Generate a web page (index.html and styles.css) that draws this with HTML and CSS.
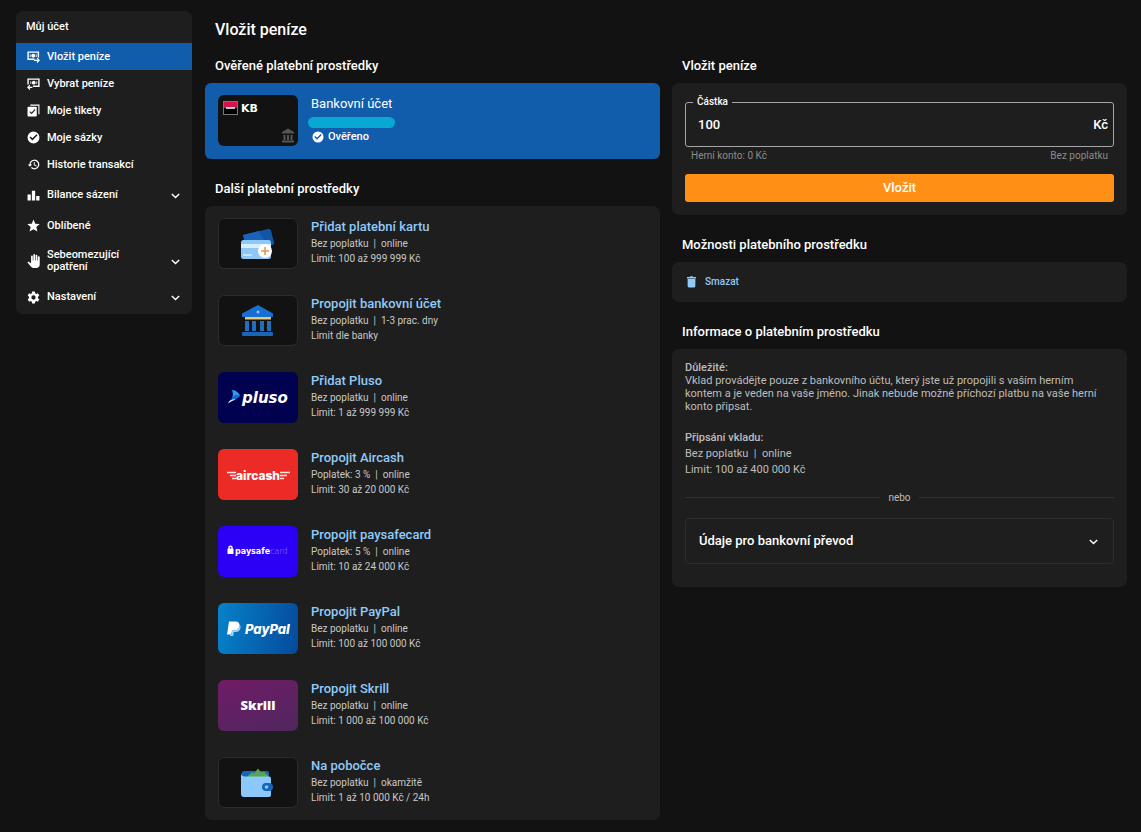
FILE: index.html
```html
<!DOCTYPE html>
<html lang="cs">
<head>
<meta charset="utf-8">
<meta name="viewport" content="width=device-width, initial-scale=1">
<title>Vložit peníze</title>
<link rel="stylesheet" href="styles.css">
</head>
<body>
<svg class="sprite" width="0" height="0" aria-hidden="true">
  <symbol id="chevron" viewBox="0 0 24 24"><path d="M4 8.500l8 8 8-8" fill="none" stroke="currentColor" stroke-width="3.200"/></symbol>
  <symbol id="check" viewBox="0 0 24 24"><path fill-rule="evenodd" d="M12 1a11 11 0 1 0 0 22 11 11 0 0 0 0-22zM10 17.5l-5.500-5.500 2-2 3.500 3.500 7.500-7.500 2 2z" fill="currentColor"/></symbol>
</svg>
<div class="page">
  <nav class="sidebar" aria-label="Můj účet">
    <h2 class="sidebar-title">Můj účet</h2>
    <a class="nav-item active" href="#vlozit"><svg class="nav-icon" viewBox="0 0 24 24"><path d="M14 17H2V4h19v10" fill="none" stroke="currentColor" stroke-width="2.600"/><circle cx="11.500" cy="10.500" r="3.500" fill="currentColor"/><path d="M6 8v5M17 8v5" stroke="currentColor" stroke-width="1.500"/><path d="M13 19h9M18.500 15l4 4-4 4" fill="none" stroke="currentColor" stroke-width="2.200"/></svg>Vložit peníze</a>
    <a class="nav-item" href="#vybrat"><svg class="nav-icon" viewBox="0 0 24 24"><path d="M2 14V4h20v13H11" fill="none" stroke="currentColor" stroke-width="2.600"/><circle cx="12.500" cy="10.500" r="3.500" fill="currentColor"/><path d="M7 8v5M18 8v5" stroke="currentColor" stroke-width="1.500"/><path d="M10 19H2M5.500 15l-4 4 4 4" fill="none" stroke="currentColor" stroke-width="2.200"/></svg>Vybrat peníze</a>
    <a class="nav-item" href="#tikety"><svg class="nav-icon" viewBox="0 0 24 24"><path d="M6 2h16v17" fill="none" stroke="currentColor" stroke-width="2"/><rect x="1" y="5" width="17" height="18" rx="1.500" fill="currentColor"/><path d="M5 14l3.500 3.500L15 10" fill="none" stroke="#1e1e1e" stroke-width="2"/></svg>Moje tikety</a>
    <a class="nav-item" href="#sazky"><svg class="nav-icon" viewBox="0 0 24 24"><use href="#check"/></svg>Moje sázky</a>
    <a class="nav-item" href="#historie"><svg class="nav-icon" viewBox="0 0 24 24"><path d="M13.500 3a9 9 0 0 0-9 9H1.500l4 4.200 4-4.200H6.800a6.800 6.800 0 1 1 2 4.800l-1.500 1.500A9 9 0 1 0 13.500 3zm-1 4.500v5.500l4.500 2.700.9-1.500-3.700-2.200V7.500z" fill="currentColor"/></svg>Historie transakcí</a>
    <button class="nav-item nav-group" type="button" aria-expanded="false"><svg class="nav-icon" viewBox="0 0 24 24"><path d="M1 10h6v11H1zM9 3h6v18H9zM17 13h6v8h-6z" fill="currentColor"/></svg><span class="nav-text">Bilance sázení</span><svg class="chevron" viewBox="0 0 24 24"><use href="#chevron"/></svg></button>
    <a class="nav-item" href="#oblibene"><svg class="nav-icon" viewBox="0 0 24 24"><path d="M12 1l3.300 7.700 8.200.7-6.300 5.500L19.200 23 12 18.700 4.800 23l2-8.100L.5 9.400l8.200-.7z" fill="currentColor"/></svg>Oblíbené</a>
    <button class="nav-item nav-group two-line" type="button" aria-expanded="false"><svg class="nav-icon hand" viewBox="0 0 24 26"><path d="M23.500 6v13a7 7 0 0 1-7 7h-4c-2 0-3.700-.8-5-2.200L.5 15.500c1.200-1.300 2.700-1.200 4-.3L7.500 17V4.500a1.500 1.500 0 0 1 3.200 0V12h1V1.800a1.500 1.500 0 0 1 3.200 0V12h1V3a1.500 1.500 0 0 1 3.200 0v9h1V6a1.700 1.700 0 0 1 3.400 0z" fill="currentColor"/></svg><span class="nav-text">Sebeomezující opatření</span><svg class="chevron" viewBox="0 0 24 24"><use href="#chevron"/></svg></button>
    <button class="nav-item nav-group" type="button" aria-expanded="false"><svg class="nav-icon" viewBox="0 0 24 24"><path fill-rule="evenodd" d="M9.500 1h5l.6 3.200 2 1.200 3.100-1.100 2.500 4.300-2.500 2.200v2.400l2.500 2.200-2.500 4.300-3.100-1.100-2 1.200-.6 3.200h-5l-.6-3.200-2-1.200-3.100 1.100-2.500-4.300 2.500-2.200v-2.400L1.300 8.600l2.500-4.300 3.100 1.100 2-1.200zM12 8a4 4 0 1 0 0 8 4 4 0 0 0 0-8z" fill="currentColor"/></svg><span class="nav-text">Nastavení</span><svg class="chevron" viewBox="0 0 24 24"><use href="#chevron"/></svg></button>
  </nav>

  <main class="content">
    <h1 class="page-title">Vložit peníze</h1>
    <div class="columns">
      <section class="column">
        <h2 class="heading">Ověřené platební prostředky</h2>
        <button class="verified" type="button" aria-pressed="true">
          <svg class="thumb plain" viewBox="0 0 80 51"><rect x="5.500" y="6.500" width="14" height="13" fill="#000" stroke="#77777b"/><path d="M6 7h13v6H6z" fill="#d5124d"/><path d="M8 13h9" stroke="#fff" stroke-width="1.400"/><text class="logo-kb" x="23" y="17">KB</text><path d="M70 33.500l6 3.500v1.500H64V37zM65.500 40h2v5h-2zM69 40h2v5h-2zM72.500 40h2v5h-2zM64 45.500h12v2H64z" fill="#555"/></svg>
          <span class="verified-info">
            <span class="verified-name">Bankovní účet</span>
            <span class="redacted"></span>
            <span class="verified-state"><svg class="state-icon" viewBox="0 0 24 24"><use href="#check"/></svg>Ověřeno</span>
          </span>
        </button>

        <h2 class="heading">Další platební prostředky</h2>
        <ul class="methods">
          <li class="method">
            <svg class="thumb" viewBox="0 0 80 51"><path d="M25 17l25-6q2.500-.5 3 1.500l3 12q.4 2-1.500 2.500L29 33z" fill="#1254a5"/><path d="M25 17l16-3.900 9 16L29 33z" fill="#1c62b8"/><rect x="23" y="22" width="30" height="19" rx="2.500" fill="#8ec8f6"/><path d="M23 26h30v4H23z" fill="#d7eeff"/><path d="M25 37h9" stroke="#d7eeff" stroke-width="1.500"/><circle cx="47" cy="33" r="7" fill="#fff"/><path d="M47 29v8M43 33h8" stroke="#e89a4f" stroke-width="1.600"/></svg>
            <div class="method-info"><a class="method-name" href="#karta">Přidat platební kartu</a><span>Bez poplatku &nbsp;|&nbsp; online</span><span>Limit: 100 až 999 999 Kč</span></div>
          </li>
          <li class="method">
            <svg class="thumb" viewBox="0 0 80 51"><path d="M40 10l15 8.500V22H24v-3.500z" fill="#176fd0"/><circle cx="40" cy="17" r="1.500" fill="#8bc8ff"/><path d="M27 22h26v2.500H27z" fill="#e5c77b"/><path d="M27 26h4v10h-4zM34 26h4v10h-4zM42 26h4v10h-4zM49 26h4v10h-4z" fill="#236dbd"/><rect x="24" y="37" width="31" height="4" rx="1" fill="#1766b8"/></svg>
            <div class="method-info"><a class="method-name" href="#ucet">Propojit bankovní účet</a><span>Bez poplatku &nbsp;|&nbsp; 1-3 prac. dny</span><span>Limit dle banky</span></div>
          </li>
          <li class="method">
            <svg class="thumb plain pluso" viewBox="0 0 80 51"><path d="M14 18q5 0 8 5.500-2.500 4-8.500 4 2.500-4 .5-9.500z" fill="#2f9cec"/><path d="M13.500 27.500q6 0 8.500-4l-5-.5z" fill="#1763cf"/><path d="M10 31.500q2-5 8-4-4 1-8 4z" fill="#d8f3ff"/><text class="logo-pluso" x="24" y="31">pluso</text></svg>
            <div class="method-info"><a class="method-name" href="#pluso">Přidat Pluso</a><span>Bez poplatku &nbsp;|&nbsp; online</span><span>Limit: 1 až 999 999 Kč</span></div>
          </li>
          <li class="method">
            <svg class="thumb plain aircash" viewBox="0 0 80 51"><path d="M9 23.500h9M12 26.500h6M14 29.500h4M62 23.500h10M62 26.500h7M62 29.500h4" stroke="#ffe4e0" stroke-width="1.400"/><text class="logo-aircash" x="40" y="30.500" text-anchor="middle">aircash</text></svg>
            <div class="method-info"><a class="method-name" href="#aircash">Propojit Aircash</a><span>Poplatek: 3 % &nbsp;|&nbsp; online</span><span>Limit: 30 až 20 000 Kč</span></div>
          </li>
          <li class="method">
            <svg class="thumb plain paysafe" viewBox="0 0 80 51"><rect x="9.500" y="22.500" width="6" height="5.500" rx=".5" fill="#fff"/><path d="M11 23v-2q1.500-1.500 3 0v2" fill="none" stroke="#fff" stroke-width="1.200"/><text class="logo-paysafe" x="17" y="28">paysafe<tspan class="thin">card</tspan></text></svg>
            <div class="method-info"><a class="method-name" href="#paysafecard">Propojit paysafecard</a><span>Poplatek: 5 % &nbsp;|&nbsp; online</span><span>Limit: 10 až 24 000 Kč</span></div>
          </li>
          <li class="method">
            <svg class="thumb plain paypal" viewBox="0 0 80 51"><path d="M11 18.500h7q4 .5 3.500 4.500-.8 4.500-5.500 4.500h-2l-.7 4H9z" fill="#fff"/><path d="M21.500 21.500q1.500 1 1 3.500-.8 4-5 4h-1.700l-.6 4h-3l.3-1.500h1l.6-4h2q4.600 0 5.400-4.500z" fill="#a8d5f6"/><text class="logo-paypal" x="27" y="31">PayPal</text></svg>
            <div class="method-info"><a class="method-name" href="#paypal">Propojit PayPal</a><span>Bez poplatku &nbsp;|&nbsp; online</span><span>Limit: 100 až 100 000 Kč</span></div>
          </li>
          <li class="method">
            <svg class="thumb plain skrill" viewBox="0 0 80 51"><text class="logo-skrill" x="40" y="30" text-anchor="middle">Skrill</text></svg>
            <div class="method-info"><a class="method-name" href="#skrill">Propojit Skrill</a><span>Bez poplatku &nbsp;|&nbsp; online</span><span>Limit: 1 000 až 100 000 Kč</span></div>
          </li>
          <li class="method">
            <svg class="thumb" viewBox="0 0 80 51"><rect x="24" y="14" width="27" height="9" rx="2" fill="#1766b8"/><path d="M29 20l5-5 2 1.500 4-5 3 4 3-1 5 5.500z" fill="#57a64f"/><path d="M23 15q0 4.500 4 4.500h24q2 0 2 2V38q0 2-2 2H26q-3 0-3-3z" fill="#8cc9fa"/><rect x="44" y="26" width="11" height="8" rx="4" fill="#1766b8"/><circle cx="48.500" cy="30" r="1.800" fill="#8cc9fa"/></svg>
            <div class="method-info"><a class="method-name" href="#pobocka">Na pobočce</a><span>Bez poplatku &nbsp;|&nbsp; okamžitě</span><span>Limit: 1 až 10 000 Kč / 24h</span></div>
          </li>
        </ul>
      </section>

      <div class="column">
        <h2 class="heading">Vložit peníze</h2>
        <form class="card deposit">
          <div class="field">
            <label class="field-label" for="amount">Částka</label>
            <input class="field-input" id="amount" type="text" inputmode="numeric" value="100">
            <span class="currency">Kč</span>
          </div>
          <div class="hints"><span>Herní konto: 0 Kč</span><span>Bez poplatku</span></div>
          <button class="submit" type="button">Vložit</button>
        </form>

        <h2 class="heading">Možnosti platebního prostředku</h2>
        <div class="card options">
          <button class="delete" type="button"><svg class="bin" viewBox="0 0 10 13"><path d="M0 1h3l.6-1h2.800L7 1h3v1.500H0zM.7 3.200h8.600V11q0 1.500-1.500 1.500H2.200Q.7 12.500.7 11z" fill="currentColor"/></svg>Smazat</button>
        </div>

        <h2 class="heading">Informace o platebním prostředku</h2>
        <section class="card info">
          <p class="notice"><strong>Důležité:</strong><br>Vklad provádějte pouze z bankovního účtu, který jste už propojili s vaším herním kontem a je veden na vaše jméno. Jinak nebude možné příchozí platbu na vaše herní konto připsat.</p>
          <p class="terms"><strong>Připsání vkladu:</strong><br>Bez poplatku &nbsp;|&nbsp; online<br>Limit: 100 až 400 000 Kč</p>
          <div class="divider">nebo</div>
          <button class="accordion" type="button" aria-expanded="false">Údaje pro bankovní převod<svg class="chevron" viewBox="0 0 24 24"><use href="#chevron"/></svg></button>
        </section>
      </div>
    </div>
  </main>
</div>
</body>
</html>
```
FILE: styles.css
```css
* { box-sizing: border-box; }

body {
  margin: 0;
  background: #121212;
  color: #fff;
  font-family: Roboto, "Liberation Sans", sans-serif;
  font-size: 11px;
}

h1, h2, p, ul { margin: 0; padding: 0; }

button, input {
  border: 0;
  padding: 0;
  background: none;
  color: inherit;
  font: inherit;
}

button { cursor: pointer; text-align: left; }
a { color: inherit; text-decoration: none; }

.sprite { display: block; }

.page {
  display: grid;
  grid-template-columns: 176px minmax(0, 1fr);
  align-items: start;
  gap: 13px;
  padding: 11px 14px 12px 16px;
}

.sidebar {
  background: #1e1e1e;
  border-radius: 7px;
}

.sidebar-title {
  padding: 0 10px;
  font-size: 11px;
  font-weight: 500;
  line-height: 32px;
}

.nav-item {
  display: flex;
  align-items: center;
  gap: 7px;
  width: 100%;
  min-height: 27px;
  padding: 0 11px;
  font-weight: 500;
  line-height: 12px;
}

.nav-item.active { background: #125cac; }

.nav-group {
  min-height: 28px;
  margin: 3px 0;
}

.nav-group.two-line { min-height: 38px; }
.nav-group + .nav-group { margin-top: 0; }

.nav-icon { width: 13px; height: 13px; flex: none; }
.nav-icon.hand { height: 16px; }
.nav-text { flex: 1; max-width: 90px; }
.chevron { width: 11px; height: 11px; flex: none; margin-left: auto; }

.page-title {
  padding: 0 10px;
  font-size: 16px;
  font-weight: 500;
  line-height: 37px;
}

.columns {
  display: grid;
  grid-template-columns: minmax(0, 1fr) minmax(0, 1fr);
  align-items: start;
  gap: 12px;
}

.heading {
  padding: 20px 10px 7px;
  font-size: 13px;
  font-weight: 500;
  line-height: 20px;
}

.column > .heading:first-child { padding-top: 8px; }

.card, .methods {
  background: #1e1e1e;
  border-radius: 7px;
}

.thumb {
  width: 80px;
  height: 51px;
  flex: none;
  border-radius: 6px;
  background: #121212;
  box-shadow: inset 0 0 0 1px #2c2c2c;
}

.thumb.plain { box-shadow: none; }
.thumb.pluso { background: #00024f; }
.thumb.aircash { background: #ec2b27; }
.thumb.paysafe { background: #2b00f5; }
.thumb.paypal { background: linear-gradient(100deg, #0782c9, #044a9c); }
.thumb.skrill { background: linear-gradient(160deg, #701b66, #4f275f); }

.thumb text { fill: #fff; }
.logo-kb { font: bold 11px "DejaVu Sans", sans-serif; }
.logo-pluso { font: italic bold 15px "DejaVu Sans", sans-serif; }
.logo-aircash { font: 800 12px Inter, sans-serif; }
.logo-paysafe { font: bold 8px "DejaVu Sans", sans-serif; }
.logo-paysafe .thin { font-weight: 200; fill: #9a86ff; }
.logo-paypal { font: italic 800 13px Inter, sans-serif; }
.logo-skrill { font: 800 13px "Open Sans", sans-serif; }

.verified {
  display: flex;
  align-items: flex-start;
  gap: 13px;
  width: 100%;
  padding: 12px 13px 13px;
  border-radius: 6px;
  background: #125cac;
}

.verified-info {
  display: flex;
  flex-direction: column;
  align-items: flex-start;
  font-weight: 500;
}

.verified-name { font-size: 13px; font-weight: 400; line-height: 18px; }

.redacted {
  width: 87px;
  height: 11px;
  margin: 4px 0 0 -3px;
  border-radius: 6px;
  background: #08a8d2;
}

.verified-state { display: flex; align-items: center; gap: 4px; line-height: 17px; }
.state-icon { width: 12px; height: 12px; margin-left: 1px; }

.methods {
  display: grid;
  gap: 26px;
  padding: 12px 13px;
  list-style: none;
}

.method { display: flex; gap: 13px; }

.method-info {
  display: flex;
  flex-direction: column;
  align-items: flex-start;
  color: #c8c8c8;
  font-size: 10px;
  line-height: 15px;
}

.method-name {
  color: #90caf9;
  font-size: 13px;
  font-weight: 500;
  line-height: 18px;
}

.deposit { padding: 19px 13px 13px; }

.field {
  position: relative;
  display: flex;
  align-items: center;
  height: 45px;
  padding: 0 5px 0 12px;
  border: 1px solid #a5a5a5;
  border-radius: 3px;
  font-size: 13px;
  font-weight: 500;
}

.field-label {
  position: absolute;
  top: -8px;
  left: 7px;
  padding: 0 4px;
  background: #1e1e1e;
  font-size: 10px;
  line-height: 14px;
}

.field-input { flex: 1; min-width: 0; outline: 0; }

.hints {
  display: flex;
  justify-content: space-between;
  padding: 1px 6px 10px;
  color: #8c8c8c;
  font-size: 10px;
  line-height: 16px;
}

.submit {
  display: block;
  width: 100%;
  border-radius: 3px;
  background: #ff9015;
  font-size: 13px;
  font-weight: 500;
  line-height: 28px;
  text-align: center;
}

.options { padding: 10px 15px; }

.delete {
  display: flex;
  align-items: center;
  gap: 9px;
  color: #90caf9;
  font-size: 10px;
  font-weight: 500;
  line-height: 20px;
}

.bin { width: 9px; height: 12px; }

.info {
  padding: 12px 13px 23px;
  color: #bdbdbd;
}

.info strong { font-weight: 500; }
.notice { padding-right: 6px; line-height: 13px; }
.terms { margin-top: 17px; line-height: 16px; }

.divider {
  display: flex;
  align-items: center;
  gap: 8px;
  margin: 11px 0 12px;
  font-size: 10px;
  line-height: 17px;
}

.divider::before, .divider::after {
  content: "";
  flex: 1;
  border-top: 1px solid #303030;
}

.accordion {
  display: flex;
  align-items: center;
  width: 100%;
  padding: 0 14px 0 13px;
  border: 1px solid #2c2c2c;
  border-radius: 4px;
  color: #fff;
  font-size: 13px;
  font-weight: 500;
  line-height: 44px;
}
```
